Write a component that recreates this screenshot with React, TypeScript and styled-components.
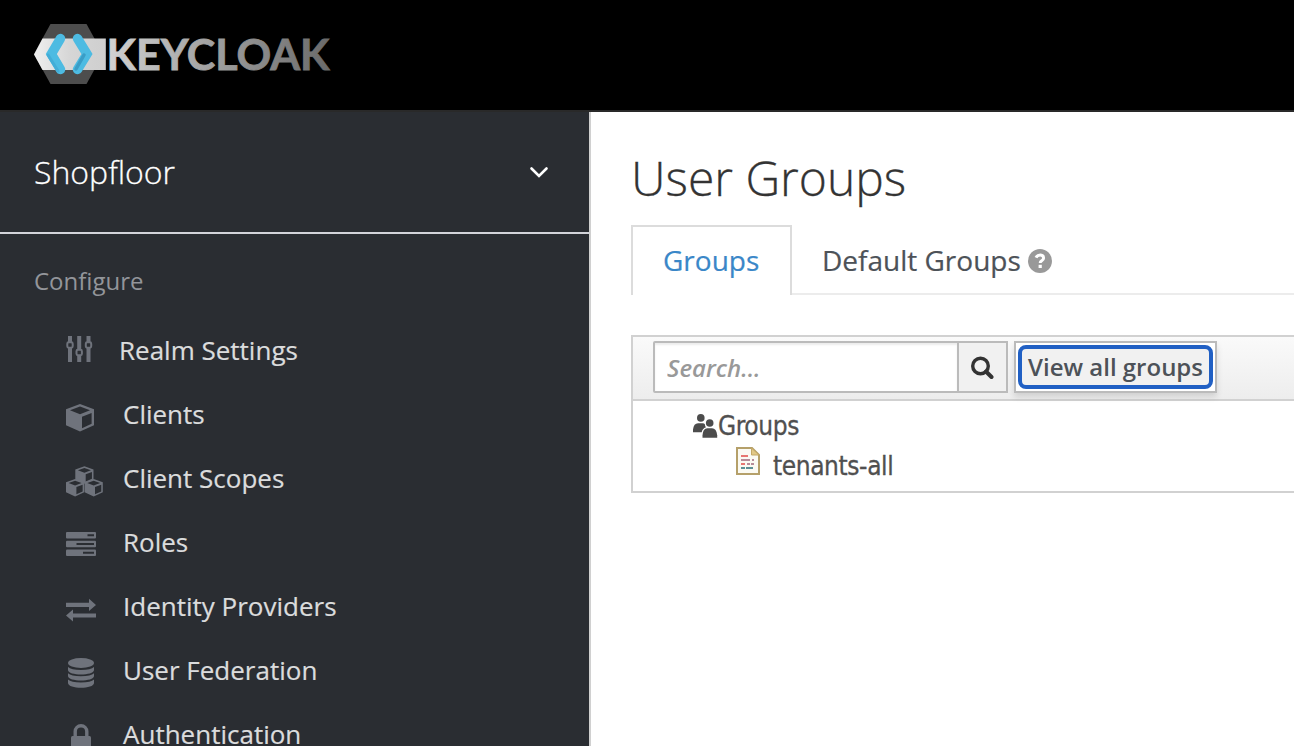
import React from 'react';
import styled, { createGlobalStyle } from 'styled-components';

const Global = createGlobalStyle`
  * { box-sizing: border-box; }
  html, body { margin: 0; height: 746px; overflow: hidden; background: #fff; }
  body { font-family: 'Open Sans', sans-serif; color: #333; }
`;

const Page = styled.div`
  display: flex;
  flex-direction: column;
  width: 1294px;
  height: 746px;
  overflow: hidden;
`;

const Masthead = styled.header`
  height: 112px;
  flex: none;
  padding: 24px 34px;
  background: #000;
  border-bottom: 2px solid #292929;
`;

const Body = styled.div`
  display: flex;
  flex: 1;
  min-height: 0;
`;

const Sidebar = styled.nav`
  width: 591px;
  flex: none;
  background: #2a2d32;
  border-right: 2px solid #d0d0d0;
  overflow: hidden;
`;

const RealmSelector = styled.div`
  display: flex;
  align-items: center;
  justify-content: space-between;
  height: 122px;
  padding: 0 40px 0 34px;
  border-bottom: 2px solid #d3d4da;
  color: #fff;
  font-size: 32px;
  font-weight: 300;
  -webkit-text-stroke: 0.3px;
`;

const RealmName = styled.span`
  padding-bottom: 2px;
`;

const SectionTitle = styled.h2`
  margin: 0;
  padding: 27px 34px 0;
  height: 84px;
  color: #93959a;
  font-size: 24px;
  font-weight: 400;
  line-height: 40px;
`;

const NavItem = styled.a`
  display: flex;
  align-items: center;
  height: 64px;
  padding-left: 65px;
  color: #dbdcdd;
  font-size: 26px;
  line-height: 64px;
  white-space: nowrap;
  -webkit-text-stroke: 0.2px;
`;

const NavIcon = styled.span<{ $w: number; $drop: number }>`
  display: flex;
  flex: none;
  width: ${(p) => p.$w}px;
  margin-top: ${(p) => p.$drop * 2}px;
  color: #6f737c;
`;

const Content = styled.main`
  flex: 1;
  min-width: 0;
  padding: 34px 0 0 40px;
  overflow: hidden;
`;

const Title = styled.h1`
  margin: 0;
  height: 79px;
  font-size: 48px;
  font-weight: 300;
  line-height: 64px;
  color: #333;
  -webkit-text-stroke: 0.3px;
`;

const Tabs = styled.div`
  display: flex;
  height: 70px;
  border-bottom: 2px solid #ececec;
`;

const Tab = styled.div<{ $active?: boolean }>`
  display: flex;
  align-items: center;
  height: ${(p) => (p.$active ? 70 : 68)}px;
  padding: ${(p) => (p.$active ? '0 30px 3px' : '1px 30px 0')};
  width: ${(p) => (p.$active ? '161px' : 'auto')};
  font-size: 28px;
  color: ${(p) => (p.$active ? '#3a87c8' : '#4d5258')};
  background: #fff;
  border: ${(p) => (p.$active ? '2px solid #dcdcdc' : '0')};
  border-bottom: 0;
  white-space: nowrap;
  -webkit-text-stroke: 0.2px;
`;

const HelpIcon = styled.svg`
  margin: 2px 0 0 7px;
`;

const Panel = styled.section`
  width: 760px;
  height: 158px;
  margin-top: 40px;
  border: 2px solid #d1d1d1;
`;

const Toolbar = styled.div`
  display: flex;
  height: 64px;
  padding: 4px 0 0 20px;
  background: linear-gradient(#fafafa, #ededed);
  border-bottom: 2px solid #d1d1d1;
`;

const SearchInput = styled.input`
  width: 306px;
  height: 52px;
  padding: 0 12px;
  border: 2px solid #bbb;
  border-radius: 2px 0 0 2px;
  box-shadow: inset 0 2px 2px rgba(3, 3, 3, 0.075);
  font: italic 600 24px 'Open Sans', sans-serif;
  outline: 0;
  &::placeholder { color: #999; opacity: 1; }
`;

const SearchButton = styled.button`
  display: flex;
  align-items: center;
  justify-content: center;
  width: 51px;
  height: 52px;
  margin-left: -2px;
  padding: 2px 2px 0 0;
  border: 2px solid #bbb;
  background: #f1f1f1;
`;

const ViewAllButton = styled.button`
  width: 203px;
  height: 52px;
  margin-left: 6px;
  padding: 2px;
  border: 2px solid #bbb;
  background: #fff;
  box-shadow: 0 4px 6px rgba(3, 3, 3, 0.12);
`;

const FocusRing = styled.span`
  display: flex;
  align-items: center;
  justify-content: center;
  height: 44px;
  padding-bottom: 2px;
  border: 4px solid #2160c4;
  border-radius: 8px;
  background: #f1f1f1;
  color: #4d5258;
  font: 600 24px 'Open Sans', sans-serif;
  white-space: nowrap;
`;

const Tree = styled.div`
  padding: 5px 0 0 60px;
  font-family: 'DejaVu Sans Condensed', 'DejaVu Sans', sans-serif;
  font-size: 26px;
  color: #505050;
`;

const TreeRow = styled.div<{ $indent?: number }>`
  display: flex;
  align-items: center;
  height: 40px;
  padding-left: ${(p) => p.$indent ?? 0}px;
  -webkit-text-stroke: 0.3px;
`;

const TreeLabel = styled.span<{ $gap?: number }>`
  margin-left: ${(p) => p.$gap ?? 0}px;
  letter-spacing: -0.4px;
`;

const FileGlyph = styled.svg`
  margin-bottom: 10px;
`;

const Logo = () => (
  <svg width="298" height="62" viewBox="34 24 298 62">
    <defs>
      <linearGradient id="word" gradientUnits="userSpaceOnUse" x1="107" x2="330" y1="0" y2="0">
        <stop offset="0" stopColor="#d2d2d2" />
        <stop offset="0.5" stopColor="#9d9d9d" />
        <stop offset="1" stopColor="#6a6a6a" />
      </linearGradient>
      <linearGradient id="band" x1="0" x2="1" y1="0" y2="0">
        <stop offset="0" stopColor="#efefef" />
        <stop offset="0.5" stopColor="#d6d6d6" />
        <stop offset="1" stopColor="#cfcfcf" />
      </linearGradient>
    </defs>
    <path d="M50.5 24H86.5L103 54L86.5 84H50.5L34 54Z" fill="#4d4d4d" />
    <path d="M42.5 38.5H105.8V70H42.5L34 54.5Z" fill="url(#band)" />
    <path d="M60.5 38.5L51.3 54L60.5 69.500" fill="none" stroke="#4dbbe2" strokeWidth="9.500" strokeLinecap="round" strokeLinejoin="miter" />
    <path d="M48 55L58 71" fill="none" stroke="#43add7" strokeWidth="3" strokeLinecap="round" />
    <path d="M77.500 38.500L87 54L77.500 69.500" fill="none" stroke="#4dbbe2" strokeWidth="9.500" strokeLinecap="round" strokeLinejoin="miter" />
    <path d="M84 55L76 69" fill="none" stroke="#3a9dc6" strokeWidth="3.500" strokeLinecap="round" />
    <text x="106.5" y="69.5" fontFamily="Lato, sans-serif" fontWeight="700" fontSize="42" textLength="223" lengthAdjust="spacingAndGlyphs" fill="url(#word)" stroke="url(#word)" strokeWidth="0.800">KEYCLOAK</text>
  </svg>
);

const Sliders = () => (
  <svg width="28" height="28" viewBox="0 0 28 28" fill="currentColor">
    <path d="M3 1h4v6H3zM3 13h4v14H3zM12.200 1h4v13.500h-4zM12.200 20.500h4V27h-4zM21.500 1h4v6h-4zM21.500 13h4v14h-4z" />
    <g fill="none" stroke="currentColor" strokeWidth="2">
      <rect x="2.300" y="7.300" width="5.400" height="5.400" rx="1.400" />
      <rect x="11.500" y="14.800" width="5.400" height="5.400" rx="1.400" />
      <rect x="20.800" y="7.300" width="5.400" height="5.400" rx="1.400" />
    </g>
  </svg>
);

const cubePath =
  'M14 0L28 5.200V21.200L14 27.600L0 21.200V5.200ZM14 2.600L4 6.300L14 10.300L24 6.300ZM16 12.800V24.200L25.600 19.700V9Z';

const Cube = () => (
  <svg width="30" height="28" viewBox="-1 0 30 28">
    <path d={cubePath} fill="currentColor" fillRule="evenodd" />
  </svg>
);

const Cubes = () => (
  <svg width="39" height="31" viewBox="-1 0 39 31" fill="currentColor" fillRule="evenodd">
    <path d={cubePath} transform="translate(9.300 0.300) scale(.65 .63)" />
    <path d={cubePath} transform="translate(0 13) scale(.65 .63)" />
    <path d={cubePath} transform="translate(18.600 13) scale(.65 .63)" />
  </svg>
);

const Tasks = () => (
  <svg width="32" height="26" viewBox="0 0 32 26">
    <g fill="currentColor">
      <rect x="1" y="1" width="30" height="6.500" rx="1" />
      <rect x="1" y="9.800" width="30" height="6.500" rx="1" />
      <rect x="1" y="18.500" width="30" height="6.500" rx="1" />
    </g>
    <path d="M22.500 4.200H29M11.500 13H29M18 21.700H29" stroke="#2a2d32" strokeWidth="2" />
  </svg>
);

const Exchange = () => (
  <svg width="32" height="26" viewBox="0 0 32 26" fill="currentColor">
    <path d="M1 5.800H24V1.800L31 8L24 14V10H1ZM31 16.500H8V12.500L1 18.500L8 24.500V20.500H31Z" />
  </svg>
);

const Database = () => (
  <svg width="32" height="32" viewBox="0 0 32 32" fill="currentColor">
    <ellipse cx="16" cy="6" rx="13" ry="5" />
    <path d="M3 10Q6 13 16 13T29 10V13C29 19 3 19 3 13ZM3 16.200Q6 19.200 16 19.200T29 16.200V19C29 25 3 25 3 19ZM3 22.400Q6 25.400 16 25.400T29 22.400V26C29 32.300 3 32.300 3 26Z" />
  </svg>
);

const Lock = () => (
  <svg width="32" height="30" viewBox="0 0 32 30">
    <rect x="6" y="13" width="20" height="15" rx="1.500" fill="currentColor" />
    <path d="M10.200 14V8.500a5.800 5.800 0 0 1 11.600 0V14" fill="none" stroke="currentColor" strokeWidth="3.400" />
  </svg>
);

const Users = () => (
  <svg width="25" height="25" viewBox="0 0 25 25" fill="#4c4c4c">
    <circle cx="7.800" cy="3.900" r="3.800" />
    <path d="M0 18.200V15.500Q0.800 9.200 5 9.200H9.500Q11.300 9.200 12 10.500Q11.800 12.200 13 13.200Q9.300 14.500 8.700 18.200Z" />
    <circle cx="16.700" cy="9" r="3.800" />
    <path d="M9.500 23.800V21.200Q10 14.200 14.300 14.200H19Q23.500 14.200 24.200 21.200V23.800Z" />
  </svg>
);

const FileIcon = () => (
  <FileGlyph width="24" height="28" viewBox="0 0 24 28">
    <path d="M1 1H16L23 8V27H1Z" fill="#fbfaf3" stroke="#b5a06a" strokeWidth="2" />
    <path d="M15.500 1V8H23Z" fill="#e2c886" stroke="#c4a866" strokeWidth="1" />
    <path d="M5 9H12M5 17H9" stroke="#e87772" strokeWidth="2" />
    <path d="M5 13H14M16 13H18M11 17H14M15 17H18" stroke="#b78c99" strokeWidth="2" />
    <path d="M5 21H9M10 21H17" stroke="#5e9096" strokeWidth="2" />
  </FileGlyph>
);

const items = [
  { label: 'Realm Settings', icon: <Sliders />, w: 54, drop: -1 },
  { label: 'Clients', icon: <Cube />, w: 58, drop: 4 },
  { label: 'Client Scopes', icon: <Cubes />, w: 58, drop: 3 },
  { label: 'Roles', icon: <Tasks />, w: 58, drop: 2 },
  { label: 'Identity Providers', icon: <Exchange />, w: 58, drop: 4 },
  { label: 'User Federation', icon: <Database />, w: 58, drop: 3 },
  { label: 'Authentication', icon: <Lock />, w: 58, drop: 4 },
];

export default function App() {
  return (
    <Page>
      <Global />
      <Masthead><Logo /></Masthead>
      <Body>
        <Sidebar>
          <RealmSelector>
            <RealmName>Shopfloor</RealmName>
            <svg width="20" height="14" viewBox="0 0 20 14">
              <path d="M2.500 3.500L10 11L17.500 3.500" fill="none" stroke="#fff" strokeWidth="2.600" strokeLinecap="round" />
            </svg>
          </RealmSelector>
          <SectionTitle>Configure</SectionTitle>
          {items.map((it) => (
            <NavItem key={it.label}>
              <NavIcon $w={it.w} $drop={it.drop}>{it.icon}</NavIcon>
              {it.label}
            </NavItem>
          ))}
        </Sidebar>
        <Content>
          <Title>User Groups</Title>
          <Tabs>
            <Tab $active>Groups</Tab>
            <Tab>
              Default Groups
              <HelpIcon width="24" height="24" viewBox="0 0 24 24">
                <circle cx="12" cy="12" r="12" fill="#999" />
                <path d="M8 8.600Q9.200 6 12.200 6Q15.600 6 15.600 9Q15.600 10.800 13.600 11.800Q12.200 12.600 12.200 14" fill="none" stroke="#fff" strokeWidth="3" />
                <rect x="10.600" y="15.800" width="3.200" height="3.200" fill="#fff" />
              </HelpIcon>
            </Tab>
          </Tabs>
          <Panel>
            <Toolbar>
              <SearchInput placeholder="Search..." />
              <SearchButton>
                <svg width="24" height="24" viewBox="0 0 24 24">
                  <circle cx="10.500" cy="10" r="7.800" fill="none" stroke="#333" strokeWidth="3.400" />
                  <path d="M16 15.500L21.500 21" stroke="#333" strokeWidth="4" strokeLinecap="round" />
                </svg>
              </SearchButton>
              <ViewAllButton><FocusRing>View all groups</FocusRing></ViewAllButton>
            </Toolbar>
            <Tree>
              <TreeRow><Users /><TreeLabel>Groups</TreeLabel></TreeRow>
              <TreeRow $indent={43}><FileIcon /><TreeLabel $gap={13}>tenants-all</TreeLabel></TreeRow>
            </Tree>
          </Panel>
        </Content>
      </Body>
    </Page>
  );
}
